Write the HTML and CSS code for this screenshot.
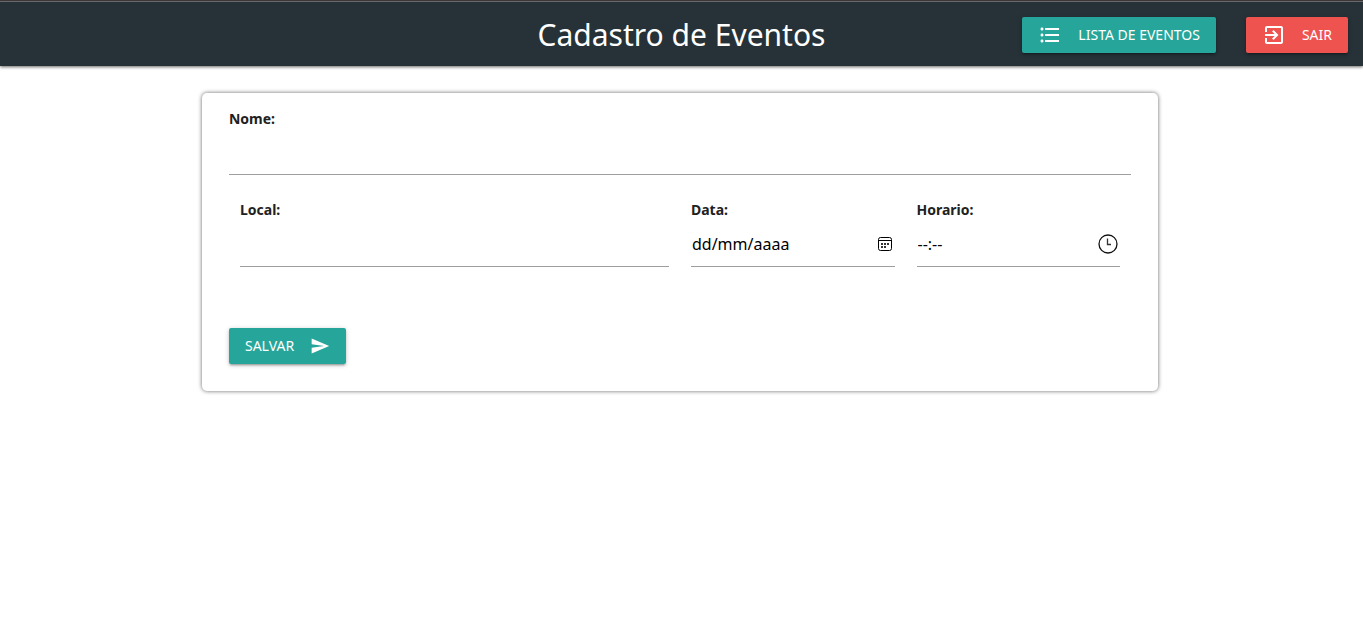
FILE: index.html
```html
<!DOCTYPE html>
<html lang="pt-BR">
<head>
<meta charset="utf-8">
<title>Cadastro de Eventos</title>
<link rel="stylesheet" href="styles.css">
</head>
<body>
<header class="navbar">
  <h1 class="title">Cadastro de Eventos</h1>
  <nav class="actions">
    <a class="btn" href="#lista"><svg class="icon" viewBox="0 0 24 24"><path d="M4 10.500c-.83 0-1.500.67-1.500 1.500s.67 1.500 1.500 1.500 1.500-.67 1.500-1.500-.67-1.500-1.500-1.500zm0-6c-.83 0-1.500.67-1.500 1.500S3.170 7.500 4 7.500 5.500 6.830 5.500 6 4.830 4.500 4 4.500zm0 12c-.83 0-1.500.68-1.500 1.500s.68 1.500 1.500 1.500 1.500-.68 1.500-1.500-.67-1.500-1.500-1.500zM7 19h14v-2H7v2zm0-6h14v-2H7v2zm0-8v2h14V5H7z"/></svg>LISTA DE EVENTOS</a>
    <a class="btn btn-exit" href="#sair"><svg class="icon" viewBox="0 0 24 24"><path d="M10.090 15.590L11.500 17l5-5-5-5-1.410 1.410L12.670 11H3v2h9.670l-2.580 2.590zM19 3H5c-1.110 0-2 .9-2 2v4h2V5h14v14H5v-4H3v4c0 1.100.89 2 2 2h14c1.100 0 2-.9 2-2V5c0-1.100-.9-2-2-2z"/></svg>SAIR</a>
  </nav>
</header>
<main>
  <form class="card">
    <div class="field">
      <label for="nome">Nome:</label>
      <div class="control"><input id="nome" type="text"></div>
    </div>
    <div class="row">
      <div class="field">
        <label for="local">Local:</label>
        <div class="control"><input id="local" type="text"></div>
      </div>
      <div class="field">
        <label for="data">Data:</label>
        <div class="control">
          <input id="data" type="text" placeholder="dd/mm/aaaa">
          <button class="picker" type="button" aria-label="Abrir calendário"><svg width="16" height="16" viewBox="0 0 16 16"><rect x="1.500" y="1.500" width="13" height="13" rx="2" fill="none" stroke="#000"/><path d="M2 4.500h12" stroke="#000"/><path d="M7 7h2v2H7zM10 7h2v2h-2zM4 7h2v2H4zM4 10h2v2H4zM7 10h2v2H7z" fill="#333"/></svg></button>
        </div>
      </div>
      <div class="field">
        <label for="horario">Horario:</label>
        <div class="control">
          <input id="horario" type="text" placeholder="--:--">
          <button class="picker" type="button" aria-label="Abrir relógio"><svg width="20" height="20" viewBox="0 0 20 20"><circle cx="10" cy="10" r="9" fill="none" stroke="#111" stroke-width="1.300"/><path d="M9.500 4.500v6H13" fill="none" stroke="#333" stroke-width="1.300"/></svg></button>
        </div>
      </div>
    </div>
    <button class="btn btn-save" type="submit">SALVAR<svg class="icon" viewBox="0 0 24 24"><path d="M2.010 21L23 12 2.010 3 2 10l15 2-15 2z"/></svg></button>
  </form>
</main>
</body>
</html>
```
FILE: styles.css
```css
* { box-sizing: border-box; }
body {
  min-height: 100vh;
  margin: 0;
  background: #fff;
  color: #212121;
  font-family: "Segoe UI", "Noto Sans", "Open Sans", sans-serif;
  font-size: 15px;
}
.navbar {
  display: grid;
  grid-template-columns: 1fr auto 1fr;
  align-items: center;
  height: 66px;
  padding: 4px 15px 0;
  background: linear-gradient(#3b3738 1px, #6b6869 1px, #6b6869 2px, #263238 2px);
  box-shadow: 0 1px 3px rgba(0, 0, 0, .6);
}
.title {
  grid-column: 2;
  margin: 0;
  color: #fff;
  font-size: 30px;
  font-weight: 400;
  line-height: 62px;
}
.actions {
  display: flex;
  justify-content: flex-end;
  gap: 30px;
}
.btn {
  display: inline-flex;
  align-items: center;
  gap: 16px;
  height: 36px;
  padding: 0 16px;
  border: 0;
  border-radius: 2px;
  background: #26a69a;
  box-shadow: 0 2px 2px rgba(0, 0, 0, .14), 0 3px 1px -2px rgba(0, 0, 0, .12), 0 1px 5px rgba(0, 0, 0, .2);
  color: #fff;
  font: 14px/36px "Segoe UI", "Noto Sans", "Open Sans", sans-serif;
  text-decoration: none;
  white-space: nowrap;
}
.btn-exit { background: #ef5350; }
.icon {
  width: 24px;
  height: 24px;
  fill: currentColor;
}
main { padding: 27px 3px 27px 0; }
.card {
  width: 70.300%;
  margin: 0 auto;
  padding: 15px 27px 27px;
  border-radius: 5px;
  box-shadow: 0 0 4px rgba(0, 0, 0, .6);
}
label {
  display: block;
  font-size: 14px;
  font-weight: 700;
  line-height: 22px;
}
.control {
  display: flex;
  align-items: center;
  height: 45px;
  border-bottom: 1px solid #9e9e9e;
}
input {
  flex: 1;
  min-width: 0;
  height: 44px;
  padding: 0 1px;
  border: 0;
  outline: 0;
  background: transparent;
  color: #000;
  font: 15px "Segoe UI", "Noto Sans", "Open Sans", sans-serif;
}
input::placeholder {
  color: #000;
  opacity: 1;
}
.picker {
  display: flex;
  padding: 0 2px;
  border: 0;
  background: none;
}
.row {
  display: grid;
  grid-template-columns: minmax(0, 2fr) minmax(0, 1fr) minmax(0, 1fr);
  margin-top: 24px;
}
.row .field { padding: 0 11px; }
.row .control { height: 46px; }
.row input { font-size: 16px; }
.btn-save { margin-top: 61px; }
.btn-save .icon {
  width: 20px;
  height: 20px;
}
```
